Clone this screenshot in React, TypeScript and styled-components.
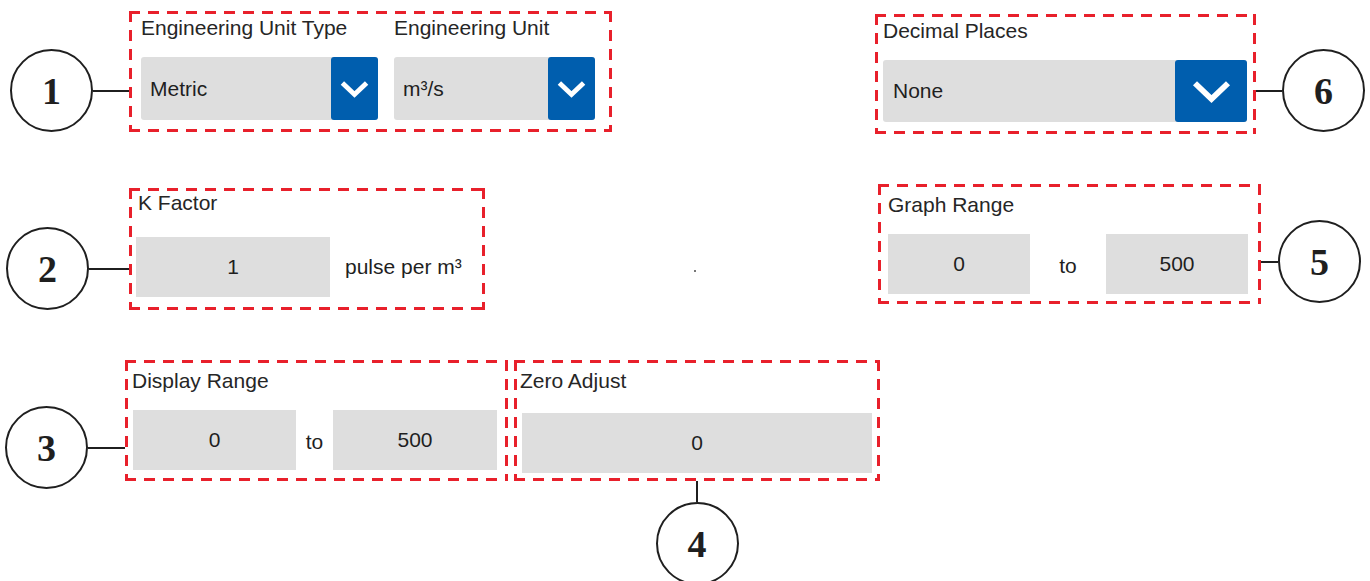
import React from 'react';
import styled, { createGlobalStyle } from 'styled-components';

const GlobalStyle = createGlobalStyle`
  html, body {
    margin: 0;
    padding: 0;
    overflow: hidden;
    background: #ffffff;
  }
  body {
    font-family: "Liberation Sans", Arial, sans-serif;
  }
`;

const RED = '#e8202b';
const INK = '#1f1f1f';

const Canvas = styled.div`
  width: 1370px;
  height: 581px;
  padding-top: 11px;
  box-sizing: border-box;
`;

const Row = styled.div<{ $top?: number }>`
  display: flex;
  align-items: flex-start;
  margin-top: ${(p) => p.$top ?? 0}px;
`;

const Slot = styled.div<{ $left?: number; $top?: number }>`
  display: flex;
  flex-direction: column;
  align-items: center;
  margin-left: ${(p) => p.$left ?? 0}px;
  margin-top: ${(p) => p.$top ?? 0}px;
`;

const Callout = styled.div<{ $left?: number; $top?: number }>`
  display: flex;
  align-items: center;
  margin-left: ${(p) => p.$left ?? 0}px;
  margin-top: ${(p) => p.$top ?? 0}px;
`;

const Bubble = styled.div`
  width: 83px;
  height: 83px;
  box-sizing: border-box;
  border: 2px solid ${INK};
  border-radius: 50%;
  display: flex;
  align-items: center;
  justify-content: center;
  font-family: "Liberation Serif", "Times New Roman", serif;
  font-weight: 700;
  font-size: 38px;
  line-height: 1;
  color: ${INK};
  background: #fff;
`;

const Leader = styled.div<{ $len: number; $vertical?: boolean }>`
  width: ${(p) => (p.$vertical ? 2 : p.$len)}px;
  height: ${(p) => (p.$vertical ? p.$len : 2)}px;
  background: ${INK};
`;

const Frame = styled.div<{ $w: number; $h: number; $pad: string; $gap: number }>`
  width: ${(p) => p.$w}px;
  height: ${(p) => p.$h}px;
  box-sizing: border-box;
  padding: ${(p) => p.$pad};
  display: flex;
  flex-direction: column;
  gap: ${(p) => p.$gap}px;
  flex-shrink: 0;
  background:
    linear-gradient(to right, ${RED} 0 11px, transparent 11px 19px) top left / 19px 3px repeat-x,
    linear-gradient(to right, ${RED} 0 11px, transparent 11px 19px) bottom left / 19px 3px repeat-x,
    linear-gradient(to bottom, ${RED} 0 11px, transparent 11px 19px) top left / 3px 19px repeat-y,
    linear-gradient(to bottom, ${RED} 0 11px, transparent 11px 19px) top right / 3px 19px repeat-y;
`;

const Label = styled.div<{ $indent?: number }>`
  font-size: 21px;
  line-height: 24px;
  color: #262626;
  margin-left: ${(p) => p.$indent ?? 0}px;
  white-space: nowrap;
`;

const Controls = styled.div<{ $gap?: number }>`
  display: flex;
  align-items: center;
  gap: ${(p) => p.$gap ?? 0}px;
`;

const Select = styled.div<{ $w: number; $h: number }>`
  width: ${(p) => p.$w}px;
  height: ${(p) => p.$h}px;
  display: flex;
  align-items: stretch;
  background: #dedede;
  border-radius: 3px;
`;

const SelectText = styled.span<{ $pad: number }>`
  flex: 1;
  display: flex;
  align-items: center;
  padding-left: ${(p) => p.$pad}px;
  font-size: 21px;
  color: ${INK};
`;

const DropButton = styled.div<{ $w: number }>`
  width: ${(p) => p.$w}px;
  display: flex;
  align-items: center;
  justify-content: center;
  background: #005eae;
  border-radius: 3px;
`;

const Field = styled.div<{ $w: number }>`
  width: ${(p) => p.$w}px;
  height: 60px;
  display: flex;
  align-items: center;
  justify-content: center;
  background: #dedede;
  font-size: 21px;
  color: ${INK};
`;

const Joiner = styled.span<{ $w: number }>`
  width: ${(p) => p.$w}px;
  text-align: center;
  font-size: 21px;
  color: ${INK};
  padding-top: 4px;
`;

const Unit = styled.span`
  margin-left: 15px;
  font-size: 21px;
  color: ${INK};
  white-space: nowrap;
`;

const Speck = styled.div<{ $left: number; $top: number }>`
  width: 2px;
  height: 2px;
  background: #777;
  margin-left: ${(p) => p.$left}px;
  margin-top: ${(p) => p.$top}px;
`;

const Chevron = ({ w, h, stroke }: { w: number; h: number; stroke: number }) => (
  <svg width={w} height={h} viewBox="0 0 30 18">
    <polyline points="4,3.5 15,14 26,3.5" fill="none" stroke="#ffffff" strokeWidth={stroke} strokeLinejoin="miter" />
  </svg>
);

const App = () => {
  return (
    <>
      <GlobalStyle />
      <Canvas>
        <Row>
          <Callout $left={10} $top={38}>
            <Bubble>1</Bubble>
            <Leader $len={36} />
          </Callout>
          <Frame $w={483} $h={121} $pad="5px 14px 0 12px" $gap={17}>
            <Controls $gap={16}>
              <Label style={{ width: 237 }}>Engineering Unit Type</Label>
              <Label>Engineering Unit</Label>
            </Controls>
            <Controls $gap={16}>
              <Select $w={237} $h={63}>
                <SelectText $pad={9}>Metric</SelectText>
                <DropButton $w={47}>
                  <Chevron w={33} h={20} stroke={4.4} />
                </DropButton>
              </Select>
              <Select $w={201} $h={63}>
                <SelectText $pad={9}>m³/s</SelectText>
                <DropButton $w={47}>
                  <Chevron w={33} h={20} stroke={4.4} />
                </DropButton>
              </Select>
            </Controls>
          </Frame>
          <Slot $left={263} $top={3}>
            <Frame $w={381} $h={120} $pad="5px 6px 0 8px" $gap={17}>
              <Label>Decimal Places</Label>
              <Select $w={364} $h={62}>
                <SelectText $pad={10}>None</SelectText>
                <DropButton $w={72}>
                  <Chevron w={45} h={27} stroke={3.9} />
                </DropButton>
              </Select>
            </Frame>
          </Slot>
          <Callout $top={38}>
            <Leader $len={26} />
            <Bubble>6</Bubble>
          </Callout>
        </Row>

        <Row $top={50}>
          <Callout $left={6} $top={43}>
            <Bubble>2</Bubble>
            <Leader $len={40} />
          </Callout>
          <Slot $top={4}>
            <Frame $w={356} $h={122} $pad="3px 0 0 7px" $gap={22}>
              <Label $indent={2}>K Factor</Label>
              <Controls>
                <Field $w={194}>1</Field>
                <Unit>pulse per m³</Unit>
              </Controls>
            </Frame>
          </Slot>
          <Speck $left={209} $top={86} />
          <Slot $left={182}>
            <Frame $w={383} $h={120} $pad="9px 0 0 10px" $gap={17}>
              <Label>Graph Range</Label>
              <Controls>
                <Field $w={142}>0</Field>
                <Joiner $w={76}>to</Joiner>
                <Field $w={142}>500</Field>
              </Controls>
            </Frame>
          </Slot>
          <Callout $top={36}>
            <Leader $len={17} />
            <Bubble>5</Bubble>
          </Callout>
        </Row>

        <Row $top={50}>
          <Callout $left={5} $top={46}>
            <Bubble>3</Bubble>
            <Leader $len={37} />
          </Callout>
          <Frame $w={383} $h={121} $pad="9px 0 0 8px" $gap={17}>
            <Label $indent={-1}>Display Range</Label>
            <Controls>
              <Field $w={163}>0</Field>
              <Joiner $w={37}>to</Joiner>
              <Field $w={164}>500</Field>
            </Controls>
          </Frame>
          <Slot $left={6}>
            <Frame $w={366} $h={121} $pad="9px 0 0 8px" $gap={20}>
              <Label $indent={-2}>Zero Adjust</Label>
              <Field $w={350}>0</Field>
            </Frame>
            <Leader $vertical $len={21} />
            <Bubble>4</Bubble>
          </Slot>
        </Row>
      </Canvas>
    </>
  );
};

export default App;
